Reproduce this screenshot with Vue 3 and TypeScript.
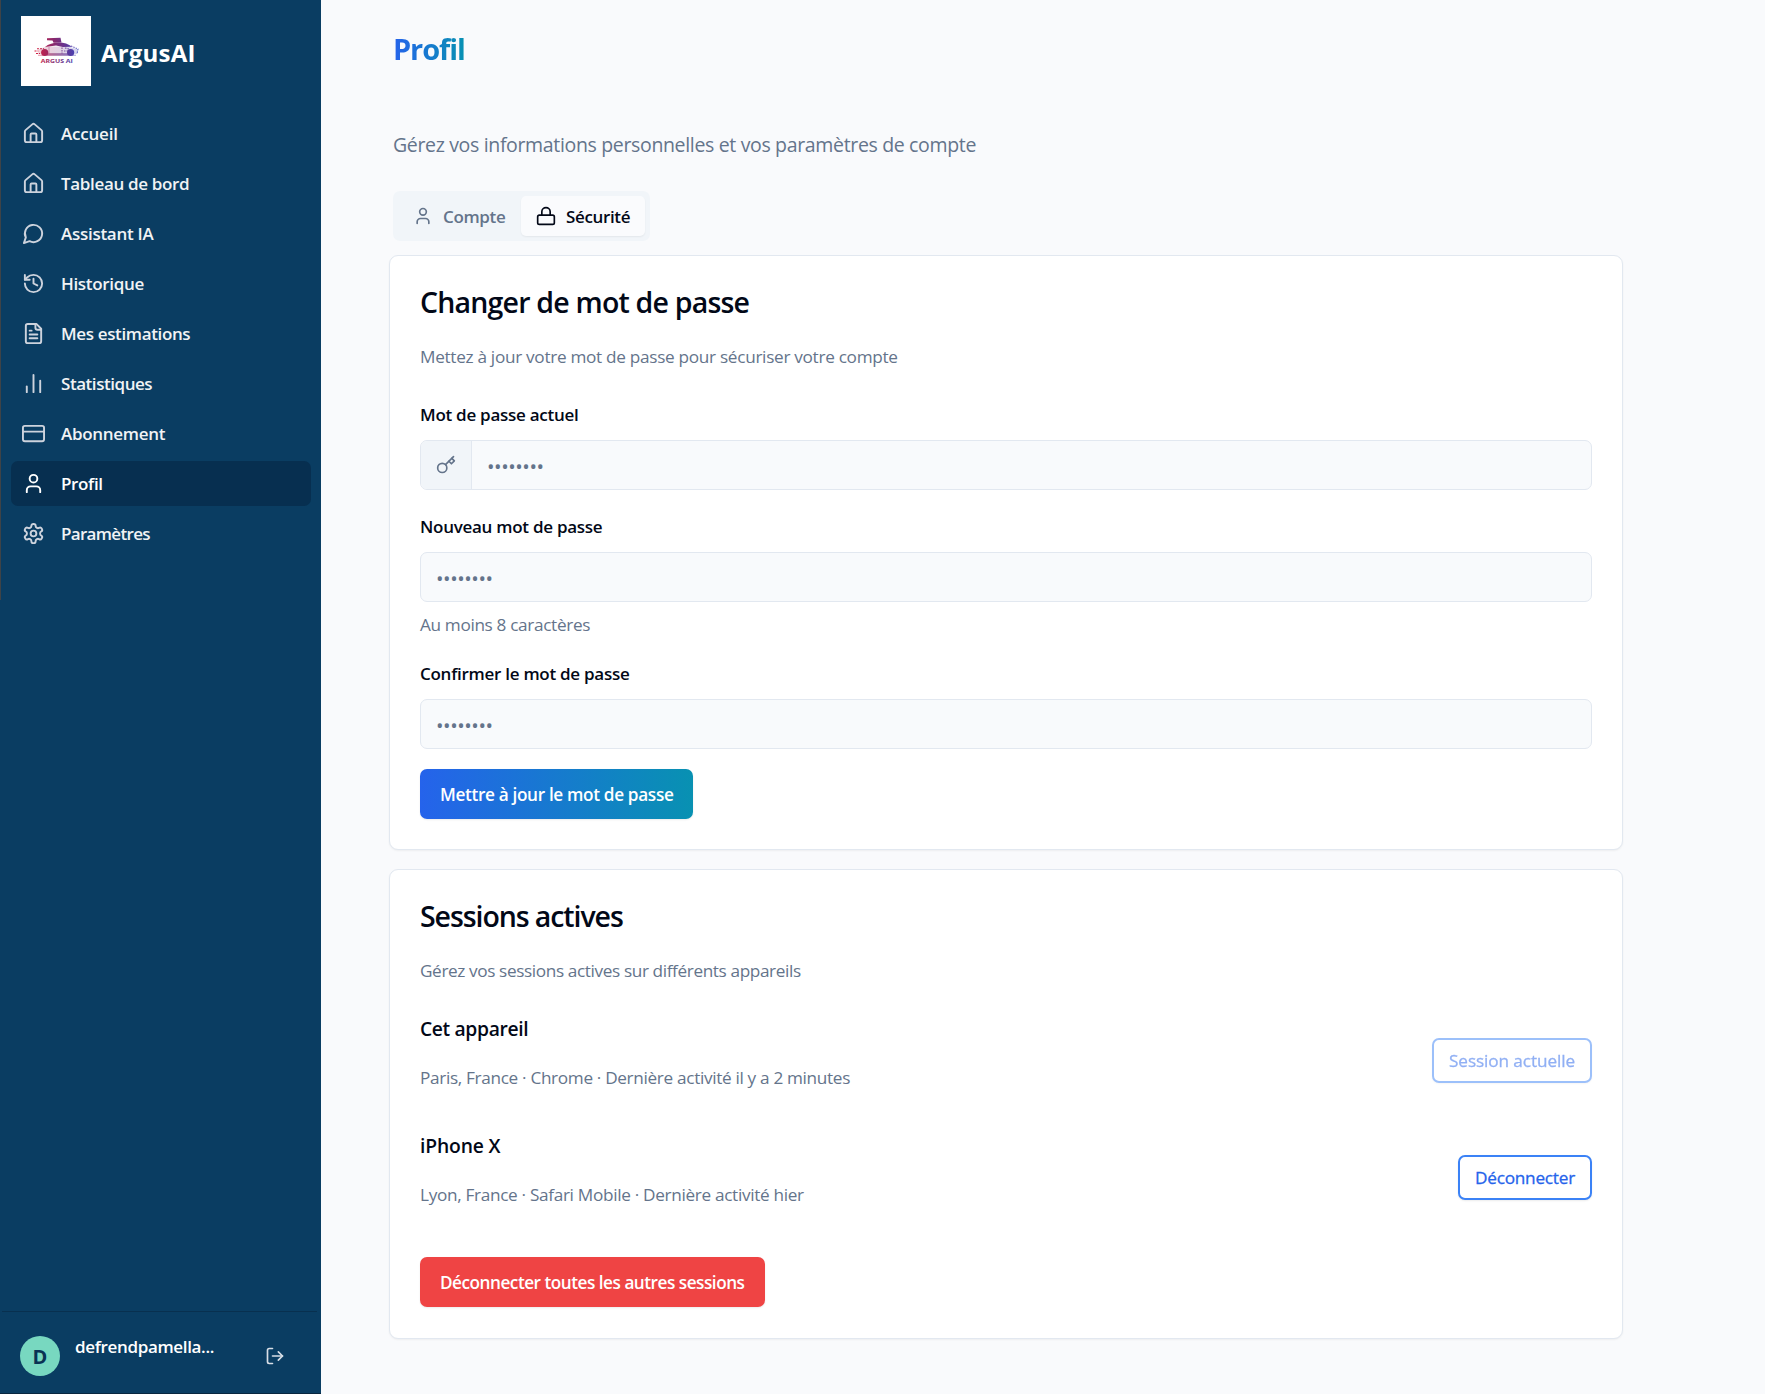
<script setup lang="ts">
interface NavItem { label: string; icon: string; spacing: number; active?: boolean }
interface Session { name: string; detail: string; action: string; current: boolean; nameSpacing: number; detailSpacing: number; actionSpacing: number }

const home = '<path d="M15 21v-8a1 1 0 0 0-1-1h-4a1 1 0 0 0-1 1v8"/><path d="M3 10a2 2 0 0 1 .709-1.528l7-5.999a2 2 0 0 1 2.582 0l7 5.999A2 2 0 0 1 21 10v9a2 2 0 0 1-2 2H5a2 2 0 0 1-2-2z"/>'

const nav: NavItem[] = [
  { label: 'Accueil', icon: home, spacing: -0.2 },
  { label: 'Tableau de bord', icon: home, spacing: -0.34 },
  { label: 'Assistant IA', icon: '<path d="M7.9 20A9 9 0 1 0 4 16.1L2 22Z"/>', spacing: -0.28 },
  { label: 'Historique', icon: '<path d="M3 12a9 9 0 1 0 9-9 9.75 9.75 0 0 0-6.74 2.74L3 8"/><path d="M3 3v5h5"/><path d="M12 7v5l4 2"/>', spacing: -0.33 },
  { label: 'Mes estimations', icon: '<path d="M15 2H6a2 2 0 0 0-2 2v16a2 2 0 0 0 2 2h12a2 2 0 0 0 2-2V7Z"/><path d="M14 2v4a2 2 0 0 0 2 2h4"/><path d="M10 9H8"/><path d="M16 13H8"/><path d="M16 17H8"/>', spacing: -0.36 },
  { label: 'Statistiques', icon: '<path d="M5 21v-6"/><path d="M12 21V3"/><path d="M19 21V9"/>', spacing: -0.45 },
  { label: 'Abonnement', icon: '<rect width="22" height="16" x="1" y="4" rx="2"/><path d="M1 10h22"/>', spacing: -0.3 },
  { label: 'Profil', icon: '<path d="M19 21v-2a4 4 0 0 0-4-4H9a4 4 0 0 0-4 4v2"/><circle cx="12" cy="7" r="4"/>', spacing: -0.35, active: true },
  { label: 'Paramètres', icon: '<path d="M12.22 2h-.44a2 2 0 0 0-2 2v.18a2 2 0 0 1-1 1.73l-.43.25a2 2 0 0 1-2 0l-.15-.08a2 2 0 0 0-2.73.73l-.22.38a2 2 0 0 0 .73 2.73l.15.1a2 2 0 0 1 1 1.72v.51a2 2 0 0 1-1 1.74l-.15.09a2 2 0 0 0-.73 2.73l.22.38a2 2 0 0 0 2.73.73l.15-.08a2 2 0 0 1 2 0l.43.25a2 2 0 0 1 1 1.73V20a2 2 0 0 0 2 2h.44a2 2 0 0 0 2-2v-.18a2 2 0 0 1 1-1.73l.43-.25a2 2 0 0 1 2 0l.15.08a2 2 0 0 0 2.73-.73l.22-.39a2 2 0 0 0-.73-2.73l-.15-.08a2 2 0 0 1-1-1.74v-.5a2 2 0 0 1 1-1.74l.15-.09a2 2 0 0 0 .73-2.73l-.22-.38a2 2 0 0 0-2.73-.73l-.15.08a2 2 0 0 1-2 0l-.43-.25a2 2 0 0 1-1-1.73V4a2 2 0 0 0-2-2z"/><circle cx="12" cy="12" r="3"/>', spacing: -0.68 },
]

const sessions: Session[] = [
  { name: 'Cet appareil', detail: 'Paris, France · Chrome · Dernière activité il y a 2 minutes', action: 'Session actuelle', current: true, nameSpacing: -0.36, detailSpacing: -0.33, actionSpacing: -0.1 },
  { name: 'iPhone X', detail: 'Lyon, France · Safari Mobile · Dernière activité hier', action: 'Déconnecter', current: false, nameSpacing: -0.15, detailSpacing: -0.32, actionSpacing: -0.22 },
]

const ls = (v: number) => ({ letterSpacing: `${v}px` })
</script>

<template>
  <div class="app">
    <aside class="sidebar">
      <div class="brand">
        <div class="logo">
          <svg viewBox="0 0 70 70" width="70" height="70">
            <defs>
              <linearGradient id="car" gradientUnits="userSpaceOnUse" x1="13" y1="0" x2="58" y2="0">
                <stop offset="0" stop-color="#dc1f3c" /><stop offset=".45" stop-color="#86296f" /><stop offset="1" stop-color="#3c46c0" />
              </linearGradient>
            </defs>
            <g fill="url(#car)">
              <path d="M17 38l1-5 8-2.500h22l9 3-.5 4.500z" opacity=".22" />
              <path d="M26 22.200l13.500-.4 1 4.700-8 .3-1-2.200-5.500-.4z" />
              <path d="M24 31c6-5.500 20-6.500 27-.2l-9 .2-7-1.500z" />
              <path d="M26 37.200h21v2.200H26z" opacity=".65" />
              <circle cx="23.700" cy="36.500" r="3.600" /><circle cx="49.600" cy="36.500" r="3.600" />
            </g>
            <g fill="none" stroke="url(#car)" stroke-width="1.100">
              <path d="M17 39.300h38" opacity=".5" />
              <path d="M13.500 35h4M15 37.500h4M16 32.800h7" stroke-dasharray="2 1" />
              <path d="M28 31v6" opacity=".35" />
              <path d="M41 31.500v6M44 32l4 1M43 35h4M50 30l7 3-1 5" stroke-dasharray="1.500 1" opacity=".8" />
            </g>
            <text x="35.800" y="47.200" text-anchor="middle" textLength="32" lengthAdjust="spacingAndGlyphs" fill="url(#car)" class="logo-text">ARGUS AI</text>
          </svg>
        </div>
        <span class="brand-name">ArgusAI</span>
      </div>
      <nav class="nav">
        <a v-for="item in nav" :key="item.label" class="nav-item" :class="{ active: item.active }">
          <svg class="icon" viewBox="0 0 24 24" v-html="item.icon" />
          <span class="nav-label" :style="ls(item.spacing)">{{ item.label }}</span>
        </a>
      </nav>
      <footer class="user">
        <div class="avatar">D</div>
        <span class="user-name">defrendpamella...</span>
        <svg class="icon logout" viewBox="0 0 24 24"><path d="M9 21H5a2 2 0 0 1-2-2V5a2 2 0 0 1 2-2h4" /><path d="m16 17 5-5-5-5" /><path d="M21 12H9" /></svg>
      </footer>
    </aside>

    <main class="main">
      <h1 class="title">Profil</h1>
      <p class="subtitle">Gérez vos informations personnelles et vos paramètres de compte</p>
      <div class="tabs">
        <button class="tab">
          <svg class="icon small" viewBox="0 0 24 24"><path d="M19 21v-2a4 4 0 0 0-4-4H9a4 4 0 0 0-4 4v2" /><circle cx="12" cy="7" r="4" /></svg>
          <span>Compte</span>
        </button>
        <button class="tab selected">
          <svg class="icon small" viewBox="0 0 24 24"><rect width="20" height="11" x="2" y="11" rx="2" /><path d="M7 11V7a5 5 0 0 1 10 0v4" /></svg>
          <span>Sécurité</span>
        </button>
      </div>

      <section class="card password">
        <h2>Changer de mot de passe</h2>
        <p class="desc">Mettez à jour votre mot de passe pour sécuriser votre compte</p>
        <label>Mot de passe actuel</label>
        <div class="input">
          <span class="prefix"><svg class="icon key" viewBox="0 0 24 24"><circle cx="7.500" cy="15.500" r="5.500" /><path d="m21 2-9.600 9.600" /><path d="m15.500 7.500 3 3L22 7l-3-3" /></svg></span>
          <span class="dots">••••••••</span>
        </div>
        <label class="next">Nouveau mot de passe</label>
        <div class="input"><span class="dots">••••••••</span></div>
        <p class="hint">Au moins 8 caractères</p>
        <label class="next">Confirmer le mot de passe</label>
        <div class="input"><span class="dots">••••••••</span></div>
        <button class="btn primary">Mettre à jour le mot de passe</button>
      </section>

      <section class="card sessions">
        <h2 class="tight">Sessions actives</h2>
        <p class="desc sessions-desc">Gérez vos sessions actives sur différents appareils</p>
        <div class="session-list">
          <div v-for="s in sessions" :key="s.name" class="session">
            <div>
              <h3 :style="ls(s.nameSpacing)">{{ s.name }}</h3>
              <p :style="ls(s.detailSpacing)">{{ s.detail }}</p>
            </div>
            <button class="outline" :class="{ current: s.current }" :style="ls(s.actionSpacing)">{{ s.action }}</button>
          </div>
        </div>
        <button class="btn danger">Déconnecter toutes les autres sessions</button>
      </section>
    </main>
  </div>
</template>

<style>
body { background: #f9fafc; }
</style>

<style scoped>
* { box-sizing: border-box; margin: 0; }
.app { display: flex; height: 1394px; overflow: hidden; background: #f9fafc; color: #020817; font-family: "Open Sans", "Noto Sans", sans-serif; font-size: 17.2px; line-height: 24px; }
button { font: inherit; border: 0; }
.icon { width: 23px; height: 23px; flex: none; fill: none; stroke: currentColor; stroke-width: 2; stroke-linecap: round; stroke-linejoin: round; }

.sidebar { display: flex; flex-direction: column; flex: none; width: 321px; height: 1394px; color: #f1f3f5; border-bottom: 1px solid #08263f; background: linear-gradient(#3f4347, #3f4347) 0 0 / 1px 600px no-repeat, #0a3d62; }
.brand { display: flex; align-items: center; gap: 10px; padding: 16px 21px 0; }
.logo { width: 70px; height: 70px; background: #fff; }
.logo svg { display: block; }
.logo-text { font: 700 5.800px "Open Sans", sans-serif; }
.brand-name { font-size: 24px; font-weight: 700; letter-spacing: .2px; color: #fff; line-height: 34px; padding-top: 4px; }
.nav { display: flex; flex-direction: column; gap: 5px; padding: 25px 10px 0 11px; }
.nav-item { display: flex; align-items: center; gap: 16px; height: 45px; padding: 0 11px; border-radius: 7px; font-size: 17px; font-weight: 600; }
.nav-item .icon { color: #cdd3dd; margin-bottom: 1px; }
.nav-label { padding-top: 1px; }
.nav-item.active { background: #072f50; color: #fff; }
.nav-item.active .icon { color: #fff; }
.user { display: flex; align-items: center; margin: auto 4px 0 2px; height: 82px; padding: 7px 0 0 18px; border-top: 1px solid #08304f; }
.avatar { display: grid; place-items: center; width: 40px; height: 40px; border-radius: 50%; background: #78d8c0; color: #0a3354; font-size: 20px; font-weight: 700; padding-top: 2px; }
.user-name { margin-left: 15px; width: 190px; font-weight: 600; font-size: 17px; letter-spacing: -.34px; color: #fff; padding-bottom: 19px; }
.logout { width: 20px; height: 20px; color: #d7dee6; }

.main { flex: 1; padding: 31px 142px 0 68px; }
.title { width: max-content; margin-left: 4px; font-size: 29px; line-height: 36px; letter-spacing: -1.1px; font-weight: 700; color: transparent; background: linear-gradient(90deg, #2563eb, #0891b2); background-clip: text; -webkit-background-clip: text; }
.subtitle { margin: 63px 0 0 4px; font-size: 19.500px; line-height: 30px; letter-spacing: -.34px; color: #64748b; }
.tabs { display: flex; width: 257px; height: 50px; margin: 31px 0 0 4px; padding: 5px; border-radius: 7px; background: #f1f5f9; }
.tab { display: flex; align-items: center; height: 40px; padding: 0 15px; border-radius: 5px; color: #64748b; background: none; font-weight: 600; font-size: 17px; letter-spacing: -.35px; }
.tab span { padding-top: 1px; }
.tab:first-child { width: 123px; }
.tab.selected { width: 124px; color: #020817; background: #fafbfd; box-shadow: 0 1px 2px rgb(0 0 0 / 6%); }
.small { width: 20px; height: 20px; margin-right: 10px; }

.card { padding: 26px 30px; border: 1px solid #e2e8f0; border-radius: 9px; background: #fff; box-shadow: 0 1px 2px rgb(0 0 0 / 5%); }
.password { height: 595px; margin-top: 14px; }
.sessions { height: 470px; margin-top: 19px; }
h2 { font-size: 28.500px; line-height: 40px; font-weight: 600; letter-spacing: -.8px; }
h2.tight { letter-spacing: -1.08px; }
.desc { margin-top: 23px; letter-spacing: -.3px; color: #64748b; }
.sessions-desc { letter-spacing: -.38px; }
label { display: block; margin-top: 34px; font-weight: 600; font-size: 17px; letter-spacing: -.27px; }
.next { margin-top: 25px; }
.hint { margin-top: 11px; letter-spacing: -.34px; color: #64748b; }
.input { display: flex; align-items: center; height: 50px; margin-top: 13px; border: 1px solid #e2e8f0; border-radius: 7px; background: #f8fafc; overflow: hidden; }
.prefix { display: grid; place-items: center; width: 51px; height: 100%; border-right: 1px solid #e2e8f0; background: #f1f5f9; color: #64748b; }
.key { width: 20px; height: 20px; }
.dots { margin-left: 15px; padding-top: 4px; font-size: 20px; color: #64748b; letter-spacing: -.45px; }
.btn { display: block; height: 50px; padding: 2px 20px 0; border-radius: 7px; color: #fff; font-weight: 600; text-align: left; white-space: nowrap; box-shadow: 0 1px 2px rgb(0 0 0 / 8%); }
.primary { width: 273px; margin-top: 20px; letter-spacing: -.34px; background: linear-gradient(90deg, #2563eb, #0891b2); }
.danger { width: 345px; margin-top: 8px; letter-spacing: -.49px; background: #ef4444; }
.session-list { margin-top: 32px; }
.session { display: flex; justify-content: space-between; align-items: flex-start; height: 117px; }
h3 { font-size: 19.300px; line-height: 28px; font-weight: 600; }
.session p { margin-top: 23px; color: #64748b; }
.outline { width: 134px; height: 45px; margin-top: 23px; padding: 1px 0 0; border: 2px solid #3b82f6; border-radius: 7px; background: #fff; color: #2563eb; box-shadow: 0 1px 2px rgb(0 0 0 / 8%); -webkit-text-stroke: .3px currentColor; white-space: nowrap; }
.outline.current { width: 160px; opacity: .5; }
</style>
